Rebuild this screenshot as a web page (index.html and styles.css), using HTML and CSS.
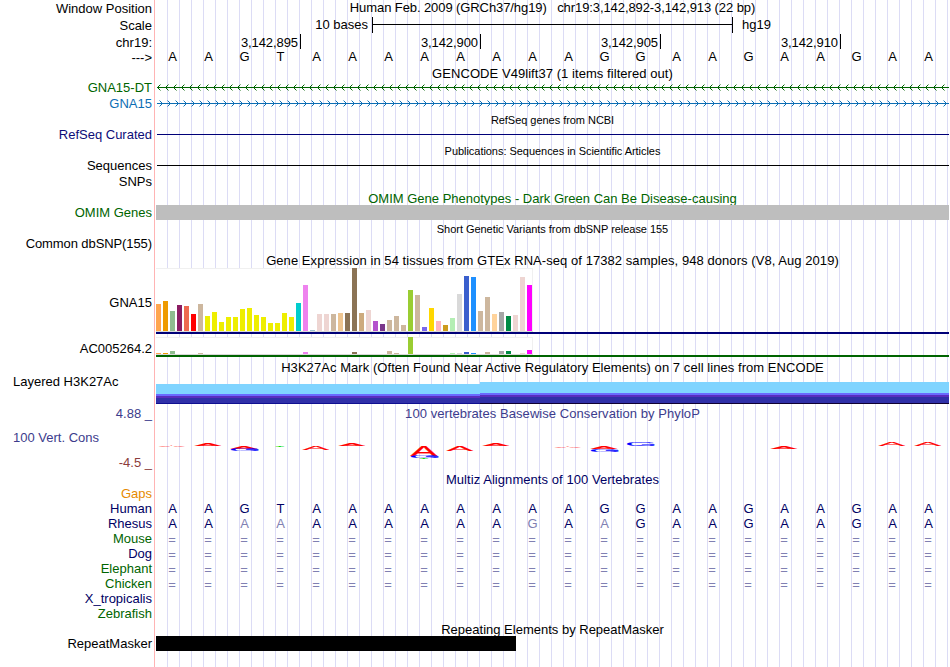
FILE: index.html
```html
<!DOCTYPE html>
<html lang="en">
<head>
  <meta charset="UTF-8" />
  <title>Human chr19:3,142,892-3,142,913</title>
  <link rel="stylesheet" href="styles.css">
</head>
<body>
  <main class="browser">
    <div class="row position">
      <div class="label">Window Position</div>
      <div class="track title tight">Human Feb. 2009 (GRCh37/hg19) &nbsp; chr19:3,142,892-3,142,913 (22 bp)</div>
    </div>
    <div class="row scale">
      <div class="label">Scale</div>
      <div class="track scale-track">
        <span class="scale-size">10 bases</span>
        <div class="scale-bar"></div>
        <span>hg19</span>
      </div>
    </div>
    <div class="row ruler">
      <div class="label">chr19:</div>
      <div class="track ruler-track">
        <span class="tick first">3,142,895</span>
        <span class="tick">3,142,900</span>
        <span class="tick">3,142,905</span>
        <span class="tick">3,142,910</span>
      </div>
    </div>
    <div class="row bases">
      <div class="label">---&gt;</div>
      <div class="track seq" data-seq="AAGTAAAAAAAAGGAAGAAGAA"></div>
    </div>

    <div class="row heading"><div class="label"></div><div class="track title wide">GENCODE V49lift37 (1 items filtered out)</div></div>
    <div class="row">
      <div class="label green">GNA15-DT</div>
      <div class="track">
        <svg class="gene" width="793" height="16">
          <defs><pattern id="minus" x="0" y="0" width="8" height="16" patternUnits="userSpaceOnUse">
            <path d="M1 7h1v1h-1zM2 6h1v1h-1zM2 8h1v1h-1zM3 5h1v1h-1zM3 9h1v1h-1z" fill="#006400"/>
            <path d="M4 4h1v1h-1zM4 10h1v1h-1z" fill="#006400" opacity="0.45"/>
          </pattern></defs>
          <rect width="793" height="16" fill="url(#minus)"/>
          <rect x="1" y="7" width="792" height="1" fill="#006400"/>
        </svg>
      </div>
    </div>
    <div class="row">
      <div class="label blue">GNA15</div>
      <div class="track">
        <svg class="gene" width="793" height="16">
          <defs><pattern id="plus" x="0" y="0" width="8" height="16" patternUnits="userSpaceOnUse">
            <path d="M6 7h1v1h-1zM5 6h1v1h-1zM5 8h1v1h-1zM4 5h1v1h-1zM4 9h1v1h-1z" fill="#0c6eb4"/>
            <path d="M3 4h1v1h-1zM3 10h1v1h-1z" fill="#0c6eb4" opacity="0.45"/>
          </pattern></defs>
          <rect width="793" height="16" fill="url(#plus)"/>
          <rect x="1" y="7" width="792" height="1" fill="#0c6eb4"/>
        </svg>
      </div>
    </div>

    <div class="row heading"><div class="label"></div><div class="track title small">RefSeq genes from NCBI</div></div>
    <div class="row"><div class="label refseq">RefSeq Curated</div><div class="track"><div class="line navy-line"></div></div></div>

    <div class="row heading"><div class="label"></div><div class="track title small">Publications: Sequences in Scientific Articles</div></div>
    <div class="row"><div class="label">Sequences</div><div class="track"><div class="line"></div></div></div>
    <div class="row"><div class="label">SNPs</div><div class="track"></div></div>

    <div class="row heading"><div class="label"></div><div class="track title green">OMIM Gene Phenotypes - Dark Green Can Be Disease-causing</div></div>
    <div class="row"><div class="label green">OMIM Genes</div><div class="track"><div class="omim"></div></div></div>

    <div class="row heading"><div class="label"></div><div class="track title small">Short Genetic Variants from dbSNP release 155</div></div>
    <div class="row"><div class="label tight">Common dbSNP(155)</div><div class="track"></div></div>

    <div class="row heading"><div class="label"></div><div class="track title wide">Gene Expression in 54 tissues from GTEx RNA-seq of 17382 samples, 948 donors (V8, Aug 2019)</div></div>
    <div class="row gtex tall">
      <div class="label">GNA15</div>
      <div class="track"><div class="bars" id="gtex-gna15"></div><div class="model navy-line"></div></div>
    </div>
    <div class="row gtex short">
      <div class="label">AC005264.2</div>
      <div class="track"><div class="bars" id="gtex-ac"></div><div class="model green-line"></div></div>
    </div>

    <div class="row histone">
      <div class="label left">Layered H3K27Ac</div>
      <div class="track">
        <div class="title wide">H3K27Ac Mark (Often Found Near Active Regulatory Elements) on 7 cell lines from ENCODE</div>
        <div class="signal">
          <div class="signal-low"></div>
          <div class="signal-high"></div>
        </div>
      </div>
    </div>

    <div class="row phylop">
      <div class="label">
        <div class="max">4.88 _</div>
        <div class="name">100 Vert. Cons</div>
        <div class="min">-4.5 _</div>
      </div>
      <div class="track">
        <div class="title wide">100 vertebrates Basewise Conservation by PhyloP</div>
        <svg id="logo" width="793" height="40"></svg>
      </div>
    </div>

    <div class="row heading"><div class="label"></div><div class="track title navy wide">Multiz Alignments of 100 Vertebrates</div></div>
    <div class="row species"><div class="label orange">Gaps</div><div class="track"></div></div>
    <div class="row species"><div class="label navy">Human</div><div class="track seq navy" data-seq="AAGTAAAAAAAAGGAAGAAGAA"></div></div>
    <div class="row species"><div class="label navy">Rhesus</div><div class="track seq navy" data-seq="AAaaAAAAAAgAaGAAGAAGAA"></div></div>
    <div class="row species"><div class="label green">Mouse</div><div class="track seq gap" data-seq="======================"></div></div>
    <div class="row species"><div class="label navy">Dog</div><div class="track seq gap" data-seq="======================"></div></div>
    <div class="row species"><div class="label green">Elephant</div><div class="track seq gap" data-seq="======================"></div></div>
    <div class="row species"><div class="label green">Chicken</div><div class="track seq gap" data-seq="======================"></div></div>
    <div class="row species"><div class="label navy">X_tropicalis</div><div class="track"></div></div>
    <div class="row species"><div class="label green">Zebrafish</div><div class="track"></div></div>

    <div class="row heading"><div class="label"></div><div class="track title">Repeating Elements by RepeatMasker</div></div>
    <div class="row last"><div class="label">RepeatMasker</div><div class="track"><div class="repeat"></div></div></div>
  </main>
  <script src="script.js"></script>
</body>
</html>
```
FILE: styles.css
```css
body {
  margin: 0;
  background: #fff;
  color: #000;
  font-family: "Liberation Sans", Arial, sans-serif;
  font-size: 13px;
  line-height: 15px;
}
.browser {
  display: flex;
  flex-direction: column;
  width: 949px;
  height: 667px;
  overflow: hidden;
}
.row {
  display: flex;
  flex: none;
  height: 16px;
}
.label {
  box-sizing: border-box;
  flex: none;
  width: 155px;
  padding-right: 2px;
  margin-right: 1px;
  border-right: 1px solid #ffb4b4;
  text-align: right;
  white-space: nowrap;
}
/* one guide line every 12px, three per base */
.track {
  flex: none;
  width: 793px;
  background: repeating-linear-gradient(to right, transparent 0 11px, #dcdcf5 11px 12px);
}
.title {
  text-align: center;
  white-space: pre;
}
.small {
  font-size: 11px;
  letter-spacing: -0.04px;
}
.wide {
  letter-spacing: 0.06px;
}
.tight {
  letter-spacing: -0.09px;
}
.heading {
  height: 15px;
}
.heading .title {
  line-height: 17px;
}

.green { color: #006400; }
.blue { color: #0c6eb4; }
.navy { color: #000064; }
.refseq { color: #0c0c78; }
.orange { color: #e68a00; }

/* position, scale and ruler */
.position {
  height: 17px;
}
.position .label, .scale .label, .ruler .label, .bases .label {
  padding-top: 1px;
}
.scale {
  height: 17px;
}
.scale-track {
  display: flex;
}
.scale-size {
  width: 212px;
  margin-right: 4px;
  text-align: right;
}
.scale-bar {
  box-sizing: border-box;
  width: 361px;
  height: 16px;
  margin-right: 9px;
  border: solid #000;
  border-width: 0 1px;
  background: linear-gradient(#000, #000) 0 7px / 100% 1px no-repeat;
}
.ruler {
  height: 15px;
}
.ruler-track {
  display: flex;
}
.tick {
  box-sizing: border-box;
  width: 180px;
  padding: 1px 2px 0 0;
  border-right: 1px solid #000;
  text-align: right;
  letter-spacing: -0.08px;
}
.tick.first {
  width: 145px;
}
.seq {
  display: flex;
}
.base {
  box-sizing: border-box;
  flex: none;
  width: 36px;
  padding-right: 3px;
  text-align: center;
}
.mismatch {
  color: #8080b2;
}
.gap {
  color: #8080b2;
}
.gap .base {
  padding: 1px 4px 0 0;
}

/* genes and simple items */
.gene {
  display: block;
  shape-rendering: crispEdges;
}
.line {
  height: 1px;
  margin: 7px 0 0 1px;
  background: #000;
}
.navy-line {
  background: #000078;
}
.green-line {
  background: #006400;
}
.omim {
  height: 15px;
  background: #bebebe;
}
.repeat {
  width: 360px;
  height: 15px;
  background: #000;
}

/* expression charts */
.gtex .track {
  display: flex;
  flex-direction: column;
}
.bars {
  box-sizing: border-box;
  display: flex;
  align-items: flex-end;
  gap: 2px;
  width: 377px;
  background: #fff;
  box-shadow: inset -1px 1px #f0f0f0;
  border-bottom: 1px solid #d9d9d9;
}
.bar {
  width: 5px;
}
.model {
  height: 2px;
}
.tall {
  height: 67px;
}
.tall .label {
  padding-top: 28px;
}
.tall .bars {
  height: 64px;
  margin-top: 1px;
}
.short {
  height: 23px;
}
.short .label {
  padding-top: 7px;
}
.short .bars {
  height: 18px;
  margin-top: 3px;
}

/* histone marks */
.histone {
  height: 47px;
}
.label.left {
  padding: 17px 0 0 13px;
  text-align: left;
}
.histone .title {
  height: 22px;
  padding-top: 3px;
}
.signal {
  display: flex;
  align-items: flex-end;
  height: 22px;
}
.signal-low {
  width: 324px;
  height: 20px;
  background: linear-gradient(#80d4ff 0 10px, #6a6aff 10px 12px, #5a2dbe 12px 14px, #3030a8 14px 19px, #101090 19px);
}
.signal-high {
  flex: 1;
  height: 22px;
  background: linear-gradient(#80d4ff 0 11px, #6a6aff 11px 13px, #5a2dbe 13px 15px, #3030a8 15px 21px, #100030 21px);
}

/* conservation */
.phylop {
  height: 67px;
  color: #3c3c8c;
}
.phylop .label {
  padding-top: 2px;
}
.phylop .name {
  margin: 9px 0 10px;
  padding-left: 13px;
  text-align: left;
}
.phylop .min {
  color: #8c3c3c;
}
.phylop .title {
  height: 22px;
  padding-top: 2px;
}
#logo {
  display: block;
}
#logo text {
  font-size: 40px;
  stroke-width: 0.4px;
  vector-effect: non-scaling-stroke;
}
.species {
  height: 15px;
}
.last {
  height: 31px;
}
```
FILE: script.js
```js
// sequence rows, one cell per base; lower case marks a mismatch
document.querySelectorAll('.seq').forEach(row => {
  for (const ch of row.dataset.seq) {
    const cell = document.createElement('span');
    cell.className = /[a-z]/.test(ch) ? 'base mismatch' : 'base';
    cell.textContent = ch.toUpperCase();
    row.appendChild(cell);
  }
});

const tissueColors = [
  '#ffa54f', '#ee9a00', '#8fbc8f', '#8b1c62', '#ee6a50', '#ff0000', '#cdb79e',
  '#eeee00', '#eeee00', '#eeee00', '#eeee00', '#eeee00', '#eeee00', '#eeee00',
  '#eeee00', '#eeee00', '#eeee00', '#eeee00', '#eeee00', '#eeee00', '#00cdcd',
  '#ee82ee', '#9ac0cd', '#eed5d2', '#eed5d2', '#cdb79e', '#eec591', '#8b7355',
  '#8b7355', '#cdaa7d', '#eed5d2', '#b452cd', '#7a378b', '#cdb79e', '#cdb79e',
  '#cdb79e', '#9acd32', '#cdb79e', '#7a67ee', '#ffd700', '#ffb6c1', '#cd9b1d',
  '#b4eeb4', '#d9d9d9', '#3a5fcd', '#1e90ff', '#cdb79e', '#cdb79e', '#ffd39b',
  '#a6a6a6', '#008b45', '#eed5d2', '#eed5d2', '#ff00ff'
];

const gna15 = [
  27, 30, 20, 26, 25, 17, 27, 15, 19, 9, 14, 14, 22, 23, 16, 14, 8, 8, 18, 14,
  28, 46, 1, 17, 17, 17, 18, 18, 63, 18, 21, 10, 7, 11, 15, 6, 41, 36, 4, 23,
  10, 6, 13, 37, 55, 54, 20, 34, 17, 19, 15, 16, 54, 46
];

const ac005264 = [
  1, 1, 3, 0, 0, 0, 1, 0, 0, 0, 0, 0, 0, 0, 0, 0, 0, 0, 0, 0,
  0, 2, 0, 0, 0, 0, 0, 0, 2, 0, 0, 0, 0, 3, 1, 0, 17, 0, 0, 0,
  0, 0, 1, 1, 2, 1, 0, 2, 0, 3, 3, 0, 1, 4
];

function drawBars(id, heights) {
  const box = document.getElementById(id);
  heights.forEach((h, i) => {
    const bar = document.createElement('div');
    bar.className = 'bar';
    bar.style.height = h + 'px';
    bar.style.background = tissueColors[i];
    box.appendChild(bar);
  });
}

drawBars('gtex-gna15', gna15);
drawBars('gtex-ac', ac005264);

// base, column, top, height in px
const logo = [
  ['A', 0, 18, 1], ['A', 1, 15, 3], ['A', 2, 18, 3], ['G', 2, 21, 2],
  ['T', 3, 18, 1], ['A', 4, 18, 4], ['A', 5, 15, 3],
  ['A', 7, 18, 10], ['G', 7, 28, 2], ['T', 7, 30, 1],
  ['A', 8, 18, 5], ['A', 9, 15, 3], ['A', 11, 18, 1.5],
  ['A', 12, 18, 3], ['G', 12, 21, 3], ['G', 13, 14, 4],
  ['A', 17, 18, 3], ['A', 20, 14, 4], ['A', 21, 14, 4]
];
const logoColors = { A: '#ff0000', G: '#0000ff', T: '#00dc00' };
// left offset and horizontal scale of each letter
const logoFit = { A: [2.5, 1], G: [1, 1.03], T: [11.5, 0.35] };
const svg = document.getElementById('logo');

logo.forEach(([base, col, top, height]) => {
  const text = document.createElementNS('http://www.w3.org/2000/svg', 'text');
  const [left, sx] = logoFit[base];
  // letters are set at 40px (cap height 27.5px) and squashed to the score
  text.setAttribute('transform', `translate(${left + col * 36} ${top + height}) scale(${sx} ${height / 27.5})`);
  text.setAttribute('fill', logoColors[base]);
  text.setAttribute('stroke', logoColors[base]);
  text.textContent = base;
  svg.appendChild(text);
});
```
